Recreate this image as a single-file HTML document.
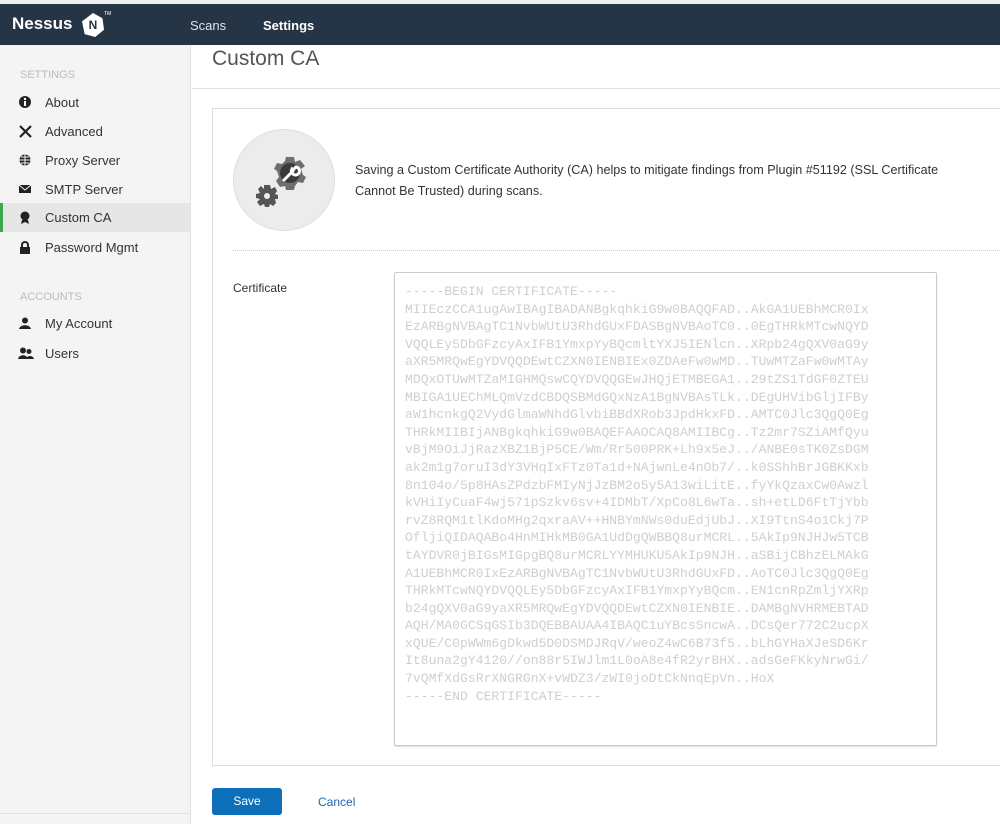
<!DOCTYPE html>
<html><head><meta charset="utf-8"><style>
*{box-sizing:border-box;margin:0;padding:0}
body{width:1000px;height:824px;overflow:hidden;background:#fff;font-family:"Liberation Sans",sans-serif;color:#333;position:relative}
.top{position:absolute;left:0;top:0;width:1000px;height:4px;background:#eceeef}
.bar{position:absolute;left:0;top:4px;width:1000px;height:41px;background:#263545}
.logo{position:absolute;left:12px;top:14px;color:#fff;font-weight:bold;font-size:17px}
.nlogo{position:absolute;left:82px;top:13px;width:22px;height:24px;background:#fff;clip-path:polygon(50% 0,93% 22%,100% 70%,60% 100%,12% 88%,0 35%);color:#263545;font-size:12px;font-weight:bold;text-align:center;line-height:24px}
.tm{position:absolute;left:104px;top:11px;color:#fff;font-size:5px}
.nav{position:absolute;top:18px;color:#fff;font-size:13px}
.side{position:absolute;left:0;top:45px;width:191px;height:779px;background:#f4f4f4;border-right:1px solid #e2e2e2}
.sh{position:absolute;left:20px;font-size:11px;color:#bbb}
.it{position:absolute;left:0;width:190px;height:29px;font-size:13px;color:#333;padding-left:45px;line-height:29px}
.it svg{position:absolute;left:19px;top:8px}
.act{background:#e6e6e6;border-left:3px solid #3ea64b}
.title{position:absolute;left:212px;top:47px;font-size:21px;color:#555}
.hr{position:absolute;left:192px;top:88px;width:808px;height:1px;background:#e3e3e3}
.panel{position:absolute;left:212px;top:108px;width:800px;height:658px;border:1px solid #ddd}
.circ{position:absolute;left:233px;top:129px;width:102px;height:102px;border-radius:50%;background:#ececec;border:1px solid #ddd}
.desc{position:absolute;left:355px;top:160px;font-size:12.6px;line-height:21px;color:#333}
.dots{position:absolute;left:233px;top:250px;width:767px;border-top:1px dotted #ccc}
.lab{position:absolute;left:233px;top:281px;font-size:12px}
.ta{position:absolute;left:394px;top:272px;width:543px;height:474px;border:1px solid #ccc;border-radius:2px;box-shadow:0 1px 1px #ddd}
pre{position:absolute;left:405px;top:283px;font-family:"Liberation Mono",monospace;font-size:13.1px;line-height:17.6px;color:#cfcfcf}
pre div{height:17.6px}
.save{position:absolute;left:212px;top:788px;width:70px;height:27px;background:#0b6fba;border-radius:3px;color:#fff;font-size:12px;text-align:center;line-height:27px}
.cancel{position:absolute;left:318px;top:795px;color:#1f66b1;font-size:12px}
.sbot{position:absolute;left:0;top:813px;width:191px;height:1px;background:#e2e2e2}
</style></head><body>
<div class="top"></div>
<div class="bar"></div>
<div class="logo">Nessus</div>
<div class="nlogo">N</div><div class="tm">TM</div>
<div class="nav" style="left:190px;color:#dfe3e7">Scans</div>
<div class="nav" style="left:263px;font-weight:bold">Settings</div>
<div class="side"></div>
<div class="sh" style="top:69px">SETTINGS</div>
<div class="it" style="top:88px"><svg width="12" height="12"><circle cx="6" cy="6" r="6" fill="#222"/><rect x="5" y="5" width="2" height="5" fill="#fff"/><circle cx="6" cy="3" r="1.2" fill="#fff"/></svg>About</div>
<div class="it" style="top:117px"><svg width="13" height="13"><path d="M1 12L12 1M1 1L12 12" stroke="#222" stroke-width="2.2"/></svg>Advanced</div>
<div class="it" style="top:146px"><svg width="12" height="12"><circle cx="6" cy="6" r="5.5" fill="#222"/><path d="M0.5 6H11.5M6 0.5V11.5M2 3H10M2 9H10" stroke="#f4f4f4" stroke-width="1"/></svg>Proxy Server</div>
<div class="it" style="top:175px"><svg width="12" height="12"><rect x="0" y="2" width="12" height="8" fill="#222"/><path d="M0 2L6 7L12 2" stroke="#f4f4f4" fill="none"/></svg>SMTP Server</div>
<div class="it act" style="top:203px;padding-left:42px"><svg width="12" height="13" style="left:16px"><circle cx="6" cy="5" r="4.5" fill="#222"/><path d="M3 9L2 13L6 11L10 13L9 9Z" fill="#222"/></svg>Custom CA</div>
<div class="it" style="top:233px"><svg width="12" height="13"><path d="M3 6V4a3 3 0 0 1 6 0v2" stroke="#222" stroke-width="2" fill="none"/><rect x="1" y="6" width="10" height="7" fill="#222"/></svg>Password Mgmt</div>
<div class="sh" style="top:291px">ACCOUNTS</div>
<div class="it" style="top:309px"><svg width="12" height="12"><circle cx="6" cy="3.5" r="3" fill="#222"/><path d="M0 12C1 7 11 7 12 12Z" fill="#222"/></svg>My Account</div>
<div class="it" style="top:339px"><svg width="16" height="12" style="left:18px"><circle cx="5" cy="3.5" r="3" fill="#222"/><path d="M0 12C1 7 9 7 10 12Z" fill="#222"/><circle cx="11" cy="4.5" r="2.5" fill="#222"/><path d="M8 12C9 8 15 8 16 12Z" fill="#222"/></svg>Users</div>
<div class="sbot"></div>
<div class="title">Custom CA</div>
<div class="hr"></div>
<div class="panel"></div>
<div class="circ"></div>
<svg style="position:absolute;left:253px;top:150px" width="62" height="62" viewBox="0 0 62 62">
<g transform="translate(37,23)"><path d="M-4 -16H4L5 -11L10 -13L15 -7L11 -4L13 2L16 4L13 10L8 9L5 13L4 17H-4L-5 13L-10 14L-14 8L-11 4L-13 -2L-16 -4L-13 -10L-8 -9L-5 -12Z" fill="#6e6e6e"/><circle r="10" fill="#3a3a3a"/><path d="M-6 7L3 -2M2 -4a4 4 0 1 0 4 -2l-3 3z" stroke="#fff" stroke-width="3" fill="none" stroke-linecap="round"/></g>
<g transform="translate(14,46)"><path d="M-3 -11H3L4 -7L8 -9L10 -5L8 -2L11 -1V3L8 3L9 7L6 10L3 8L2 11H-2L-3 8L-7 10L-10 6L-7 3L-11 2V-2L-7 -3L-9 -7L-6 -10L-3 -7Z" fill="#555"/><circle r="3" fill="#ececec"/></g>
</svg>
<div class="desc">Saving a Custom Certificate Authority (CA) helps to mitigate findings from Plugin #51192 (SSL Certificate<br>Cannot Be Trusted) during scans.</div>
<div class="dots"></div>
<div class="lab">Certificate</div>
<div class="ta"></div>
<pre><div>-----BEGIN CERTIFICATE-----</div><div>MIIEczCCA1ugAwIBAgIBADANBgkqhkiG9w0BAQQFAD..AkGA1UEBhMCR0Ix</div><div>EzARBgNVBAgTC1NvbWUtU3RhdGUxFDASBgNVBAoTC0..0EgTHRkMTcwNQYD</div><div>VQQLEy5DbGFzcyAxIFB1YmxpYyBQcmltYXJ5IENlcn..XRpb24gQXV0aG9y</div><div>aXR5MRQwEgYDVQQDEwtCZXN0IENBIEx0ZDAeFw0wMD..TUwMTZaFw0wMTAy</div><div>MDQxOTUwMTZaMIGHMQswCQYDVQQGEwJHQjETMBEGA1..29tZS1TdGF0ZTEU</div><div>MBIGA1UEChMLQmVzdCBDQSBMdGQxNzA1BgNVBAsTLk..DEgUHVibGljIFBy</div><div>aW1hcnkgQ2VydGlmaWNhdGlvbiBBdXRob3JpdHkxFD..AMTC0Jlc3QgQ0Eg</div><div>THRkMIIBIjANBgkqhkiG9w0BAQEFAAOCAQ8AMIIBCg..Tz2mr7SZiAMfQyu</div><div>vBjM9OiJjRazXBZ1BjP5CE/Wm/Rr500PRK+Lh9x5eJ../ANBE0sTK0ZsDGM</div><div>ak2m1g7oruI3dY3VHqIxFTz0Ta1d+NAjwnLe4nOb7/..k0SShhBrJGBKKxb</div><div>8n104o/5p8HAsZPdzbFMIyNjJzBM2o5y5A13wiLitE..fyYkQzaxCw0Awzl</div><div>kVHiIyCuaF4wj571pSzkv6sv+4IDMbT/XpCo8L6wTa..sh+etLD6FtTjYbb</div><div>rvZ8RQM1tlKdoMHg2qxraAV++HNBYmNWs0duEdjUbJ..XI9TtnS4o1Ckj7P</div><div>OfljiQIDAQABo4HnMIHkMB0GA1UdDgQWBBQ8urMCRL..5AkIp9NJHJw5TCB</div><div>tAYDVR0jBIGsMIGpgBQ8urMCRLYYMHUKU5AkIp9NJH..aSBijCBhzELMAkG</div><div>A1UEBhMCR0IxEzARBgNVBAgTC1NvbWUtU3RhdGUxFD..AoTC0Jlc3QgQ0Eg</div><div>THRkMTcwNQYDVQQLEy5DbGFzcyAxIFB1YmxpYyBQcm..EN1cnRpZmljYXRp</div><div>b24gQXV0aG9yaXR5MRQwEgYDVQQDEwtCZXN0IENBIE..DAMBgNVHRMEBTAD</div><div>AQH/MA0GCSqGSIb3DQEBBAUAA4IBAQC1uYBcsSncwA..DCsQer772C2ucpX</div><div>xQUE/C0pWWm6gDkwd5D0DSMDJRqV/weoZ4wC6B73f5..bLhGYHaXJeSD6Kr</div><div>It8una2gY4120//on88r5IWJlm1L0oA8e4fR2yrBHX..adsGeFKkyNrwGi/</div><div>7vQMfXdGsRrXNGRGnX+vWDZ3/zWI0joDtCkNnqEpVn..HoX</div><div>-----END CERTIFICATE-----</div></pre>
<div class="save">Save</div>
<div class="cancel">Cancel</div>
</body></html>
